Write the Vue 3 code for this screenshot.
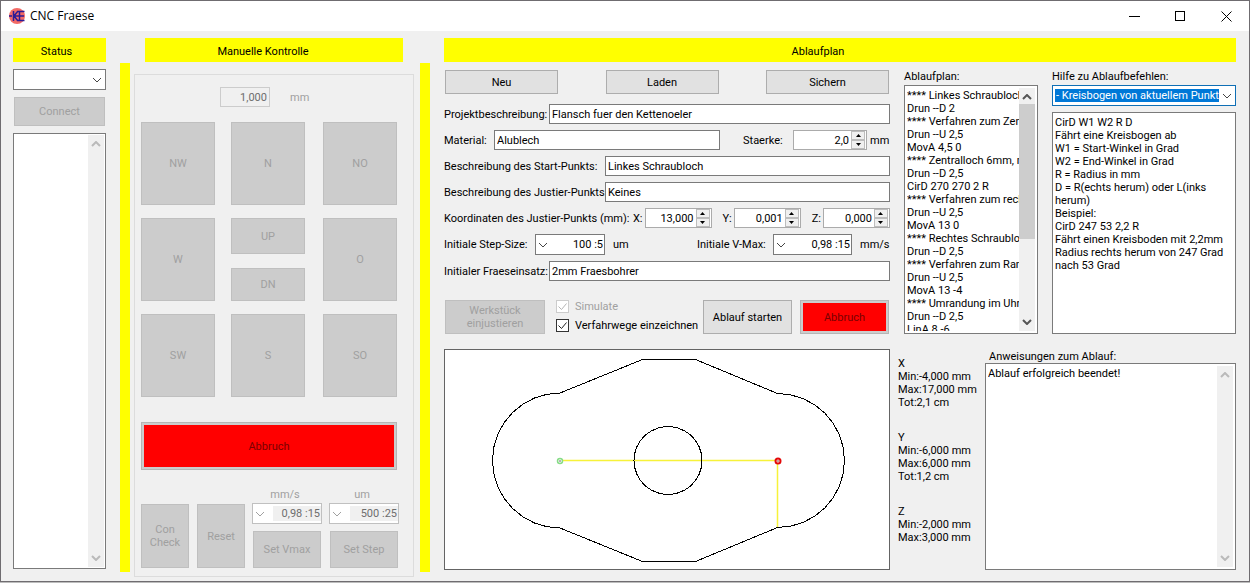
<script setup>
import { ref } from 'vue'

const simulate = ref(true)
const drawMoves = ref(true)

const planLines = [
  '**** Linkes Schraubloch',
  'Drun --D 2',
  '**** Verfahren zum Zent',
  'Drun --U 2,5',
  'MovA 4,5 0',
  '**** Zentralloch 6mm, m',
  'Drun --D 2,5',
  'CirD 270 270 2 R',
  '**** Verfahren zum recht',
  'Drun --U 2,5',
  'MovA 13 0',
  '**** Rechtes Schraubloc',
  'Drun --D 2,5',
  '**** Verfahren zum Rand',
  'Drun --U 2,5',
  'MovA 13 -4',
  '**** Umrandung im Uhrz',
  'Drun --D 2,5',
  'LinA 8 -6',
]
const planText = ref(planLines.join('\n'))

const helpText = ref(
  [
    'CirD W1 W2 R D',
    'Fährt eine Kreisbogen ab',
    'W1 = Start-Winkel in Grad',
    'W2 = End-Winkel in Grad',
    'R = Radius in mm',
    'D = R(echts herum) oder L(inks herum)',
    'Beispiel:',
    'CirD 247 53 2,2 R',
    'Fährt einen Kreisboden mit 2,2mm Radius rechts herum von 247 Grad nach 53 Grad',
  ].join('\n')
)

const axes = [
  { name: 'X', rows: ['Min:-4,000 mm', 'Max:17,000 mm', 'Tot:2,1 cm'] },
  { name: 'Y', rows: ['Min:-6,000 mm', 'Max:6,000 mm', 'Tot:1,2 cm'] },
  { name: 'Z', rows: ['Min:-2,000 mm', 'Max:3,000 mm'] },
]

const coords = [
  { axis: 'X', value: '13,000' },
  { axis: 'Y', value: '0,001' },
  { axis: 'Z', value: '0,000' },
]

/* Points along an arc, in degrees, clockwise on screen */
function arc(cx, cy, r, from, to, steps) {
  return Array.from({ length: steps + 1 }, (_, i) => {
    const a = ((from + ((to - from) * i) / steps) * Math.PI) / 180
    return `${(cx + r * Math.cos(a)).toFixed(1)},${(cy + r * Math.sin(a)).toFixed(1)}`
  })
}

const outline = [
  '197.5,9.5',
  '250.5,9.5',
  ...arc(332.5, 110.5, 67, -90, 90, 16),
  '250.5,211.5',
  '197.5,211.5',
  ...arc(115, 110.5, 67.5, 90, 270, 16),
].join(' ')
const hole = arc(223, 110.5, 34, 0, 360, 30).join(' ')
</script>

<template>
  <div class="window">
    <header class="titlebar">
      <svg class="logo" viewBox="0 0 16 16" aria-hidden="true">
        <circle cx="8" cy="8" r="8" fill="#f26a66" />
        <path d="M0 8h3M4.500 3v10M9 3L5 8l4 5M10.500 3v10M9 3.500h6.500M5 8h10M9 12.500h6.500" fill="none" stroke="#2a1a96" stroke-width="1.500" />
      </svg>
      <h1>CNC Fraese</h1>
      <button class="caption" aria-label="Minimieren">
        <svg viewBox="0 0 11 11"><path d="M0 5.500h11" /></svg>
      </button>
      <button class="caption" aria-label="Maximieren">
        <svg viewBox="0 0 11 11"><path d="M.5.5h9v9h-9z" /></svg>
      </button>
      <button class="caption" aria-label="Schließen">
        <svg viewBox="0 0 11 11"><path class="smooth" d="M.5.5l10 10M10.500.5l-10 10" /></svg>
      </button>
    </header>

    <main class="client">
      <section class="status">
        <h2>Status</h2>
        <div class="combo port">
          <select aria-label="Anschluss"><option></option></select>
          <svg viewBox="0 0 10 6"><path d="M1 1l4 4 4-4" /></svg>
        </div>
        <button class="btn connect" disabled>Connect</button>
        <div class="box messages">
          <textarea aria-label="Meldungen" readonly></textarea>
          <div class="bar idle">
            <svg viewBox="0 0 10 6"><path d="M1 5l4-4 4 4" /></svg>
            <svg viewBox="0 0 10 6"><path d="M1 1l4 4 4-4" /></svg>
          </div>
        </div>
      </section>

      <div class="divider"></div>

      <section class="manual">
        <h2>Manuelle Kontrolle</h2>
        <div class="panel">
          <div class="distance">
            <input id="distance" value="1,000" disabled />
            <label for="distance">mm</label>
          </div>
          <div class="pad">
            <button class="btn" disabled>NW</button>
            <button class="btn" disabled>N</button>
            <button class="btn" disabled>NO</button>
            <button class="btn" disabled>W</button>
            <div class="updown">
              <button class="btn up" disabled>UP</button>
              <button class="btn down" disabled>DN</button>
            </div>
            <button class="btn" disabled>O</button>
            <button class="btn" disabled>SW</button>
            <button class="btn" disabled>S</button>
            <button class="btn" disabled>SO</button>
          </div>
          <button class="stop wide" disabled>Abbruch</button>
          <div class="settings">
            <button class="btn tall" disabled>Con Check</button>
            <button class="btn tall" disabled>Reset</button>
            <div class="setting">
              <label for="vmax">mm/s</label>
              <div class="combo left off">
                <svg viewBox="0 0 10 6"><path d="M1 1l4 4 4-4" /></svg>
                <select id="vmax" disabled><option>0,98 :15</option></select>
              </div>
              <button class="btn" disabled>Set Vmax</button>
            </div>
            <div class="setting">
              <label for="step">um</label>
              <div class="combo left off">
                <svg viewBox="0 0 10 6"><path d="M1 1l4 4 4-4" /></svg>
                <select id="step" disabled><option>500 :25</option></select>
              </div>
              <button class="btn" disabled>Set Step</button>
            </div>
          </div>
        </div>
      </section>

      <div class="divider second"></div>

      <section class="plan">
        <h2>Ablaufplan</h2>
        <div class="upper">
          <form class="form" @submit.prevent>
            <div class="files">
              <button type="button" class="btn">Neu</button>
              <button type="button" class="btn">Laden</button>
              <button type="button" class="btn save">Sichern</button>
            </div>
            <div class="row">
              <label for="project" class="l-project">Projektbeschreibung:</label>
              <input id="project" class="text" value="Flansch fuer den Kettenoeler" />
            </div>
            <div class="row">
              <label for="material" class="l-material">Material:</label>
              <input id="material" class="text" value="Alublech" />
              <label for="thickness" class="l-thick">Staerke:</label>
              <div class="spin thick">
                <input id="thickness" value="2,0" />
                <div class="arrows">
                  <button type="button" aria-label="Mehr"><svg viewBox="0 0 5 3"><path d="M0 3h5L2.500 0z" /></svg></button>
                  <button type="button" aria-label="Weniger"><svg viewBox="0 0 5 3"><path d="M0 0h5L2.500 3z" /></svg></button>
                </div>
              </div>
              <span class="unit-mm">mm</span>
            </div>
            <div class="row">
              <label for="start" class="l-point">Beschreibung des Start-Punkts:</label>
              <input id="start" class="text" value="Linkes Schraubloch" />
            </div>
            <div class="row">
              <label for="adjust" class="l-point">Beschreibung des Justier-Punkts:</label>
              <input id="adjust" class="text" value="Keines" />
            </div>
            <div class="row coords">
              <span class="l-coords">Koordinaten des Justier-Punkts (mm):</span>
              <div v-for="c in coords" :key="c.axis" class="coord">
                <label :for="'coord' + c.axis">{{ c.axis }}:</label>
                <div class="spin">
                  <input :id="'coord' + c.axis" :value="c.value" />
                  <div class="arrows">
                    <button type="button" aria-label="Mehr"><svg viewBox="0 0 5 3"><path d="M0 3h5L2.500 0z" /></svg></button>
                    <button type="button" aria-label="Weniger"><svg viewBox="0 0 5 3"><path d="M0 0h5L2.500 3z" /></svg></button>
                  </div>
                </div>
              </div>
            </div>
            <div class="row">
              <label for="initstep" class="l-step">Initiale Step-Size:</label>
              <div class="combo left w70">
                <svg viewBox="0 0 10 6"><path d="M1 1l4 4 4-4" /></svg>
                <select id="initstep"><option>100 :5</option></select>
              </div>
              <span class="unit-um">um</span>
              <label for="initvmax" class="l-vmax">Initiale V-Max:</label>
              <div class="combo left w79">
                <svg viewBox="0 0 10 6"><path d="M1 1l4 4 4-4" /></svg>
                <select id="initvmax"><option>0,98 :15</option></select>
              </div>
              <span class="unit-speed">mm/s</span>
            </div>
            <div class="row">
              <label for="tool" class="l-project">Initialer Fraeseinsatz:</label>
              <input id="tool" class="text" value="2mm Fraesbohrer" />
            </div>
            <div class="actions">
              <button type="button" class="btn align" disabled>Werkstück<br />einjustieren</button>
              <div class="checks">
                <label class="check off">
                  <input v-model="simulate" type="checkbox" disabled />
                  <svg viewBox="0 0 11 11"><path d="M1.500 5.500l3 3 5-6" /></svg>Simulate
                </label>
                <label class="check">
                  <input v-model="drawMoves" type="checkbox" />
                  <svg viewBox="0 0 11 11"><path d="M1.500 5.500l3 3 5-6" /></svg>Verfahrwege einzeichnen
                </label>
              </div>
              <button type="button" class="btn run">Ablauf starten</button>
              <button type="button" class="stop" disabled>Abbruch</button>
            </div>
          </form>

          <div class="listing">
            <label for="listing">Ablaufplan:</label>
            <div class="box">
              <textarea id="listing" v-model="planText" wrap="off"></textarea>
              <div class="bar">
                <svg viewBox="0 0 10 6"><path d="M1 5l4-4 4 4" /></svg>
                <div class="track"><div class="thumb"></div></div>
                <svg viewBox="0 0 10 6"><path d="M1 1l4 4 4-4" /></svg>
              </div>
            </div>
          </div>

          <div class="help">
            <label for="topic">Hilfe zu Ablaufbefehlen:</label>
            <div class="combo topic">
              <input id="topic" value="- Kreisbogen von aktuellem Punkt" />
              <svg viewBox="0 0 10 6"><path d="M1 1l4 4 4-4" /></svg>
            </div>
            <div class="box helpbox">
              <textarea v-model="helpText" aria-label="Hilfetext" readonly></textarea>
            </div>
          </div>
        </div>

        <div class="lower">
          <div class="canvas">
            <svg viewBox="0 0 444 219" role="img" aria-label="Fräsweg">
              <path d="M117 110.500h216M332.500 111v67" fill="none" stroke="#f7f23a" stroke-width="1.500" />
              <g fill="none" stroke="#000" shape-rendering="crispEdges">
                <polygon :points="outline" />
                <polygon :points="hole" />
              </g>
              <circle cx="115" cy="111" r="2.500" fill="#fff" stroke="#86dc86" stroke-width="1.500" />
              <circle cx="115" cy="111" r=".7" fill="#333" />
              <circle cx="333" cy="111" r="2.500" fill="#fff" stroke="#e30808" stroke-width="2" />
              <circle cx="333" cy="111" r=".7" fill="#600" />
            </svg>
          </div>
          <div class="axes">
            <div v-for="a in axes" :key="a.name">
              <p>{{ a.name }}</p>
              <p v-for="r in a.rows" :key="r">{{ r }}</p>
            </div>
          </div>
          <div class="log">
            <label for="log">Anweisungen zum Ablauf:</label>
            <div class="box">
              <textarea id="log" readonly>Ablauf erfolgreich beendet!</textarea>
              <div class="bar idle">
                <svg viewBox="0 0 10 6"><path d="M1 5l4-4 4 4" /></svg>
                <svg viewBox="0 0 10 6"><path d="M1 1l4 4 4-4" /></svg>
              </div>
            </div>
          </div>
        </div>
      </section>
    </main>
  </div>
</template>

<style>
body {
  background: #bdbdbd;
}
</style>

<style scoped>
* {
  box-sizing: border-box;
}
.window {
  display: flex;
  flex-direction: column;
  min-height: calc(100vh - 1px);
  border: 1px solid #6f6c70;
  background: #f0f0f0;
  color: #000;
  font: 11px/13px Roboto, sans-serif;
}
button,
input,
select,
textarea {
  margin: 0;
  padding: 0;
  border: 0;
  border-radius: 0;
  background: none;
  color: inherit;
  font: inherit;
  min-width: 0;
}
label,
span,
p {
  white-space: nowrap;
}
p {
  margin: 0;
}
svg {
  display: block;
}

.titlebar {
  display: flex;
  align-items: center;
  height: 30px;
  padding-left: 8px;
  background: #fff;
}
.logo {
  width: 16px;
  height: 16px;
}
h1 {
  flex: 1;
  margin: 0 0 0 5px;
  font: 12px/16px 'Open Sans', sans-serif;
}
.caption {
  display: grid;
  place-items: center;
  width: 46px;
  height: 30px;
}
.caption svg {
  width: 11px;
  height: 11px;
  fill: none;
  stroke: #000;
  shape-rendering: crispEdges;
}
.caption .smooth {
  shape-rendering: auto;
}

.client {
  display: flex;
  flex: 1;
  padding: 7px 13px 0 12px;
}
h2 {
  height: 24px;
  margin: 0;
  padding-top: 1px;
  background: #ff0;
  font: inherit;
  line-height: 25px;
  text-align: center;
}
.status {
  display: flex;
  flex-direction: column;
  width: 93px;
  gap: 7px;
  padding-bottom: 12px;
}
.status h2 {
  padding-right: 6px;
}
.divider {
  width: 10px;
  margin: 25px 4px 9px 14px;
  background: #ff0;
}
.divider.second {
  margin: 25px 14px 9px 6px;
}

.btn {
  border: 1px solid #adadad;
  background: #e1e1e1;
}
.btn:disabled {
  border-color: #bfbfbf;
  background: #ccc;
  color: #a0a0a0;
}
.connect {
  height: 29px;
  margin: 0 1px;
}
.stop {
  border: 1px solid #b5b5b5;
  background: #f00;
  box-shadow: inset 0 0 0 2px #ccc;
  color: #7a0000;
}

.combo {
  display: flex;
  align-items: center;
  height: 21px;
  border: 1px solid #7a7a7a;
  background: #fff;
}
.combo select {
  flex: 1;
  height: 100%;
  appearance: none;
}
.combo svg {
  flex: none;
  width: 10px;
  height: 6px;
  margin: 0 3px 0 5px;
}
.combo svg,
.bar svg {
  fill: none;
  stroke: #444;
}
.combo.left svg {
  margin: 0 8px 0 2px;
}
.combo.left select {
  height: 15px;
  padding-right: 1px;
  text-align-last: right;
  line-height: 15px;
}
.combo.off {
  border-color: #c0c0c0;
}
.combo.off svg {
  stroke: #a0a0a0;
}
.combo.off select {
  background: #f0f0f0;
  color: #6d6d6d;
  opacity: 1;
}
.w70 {
  width: 70px;
}
.w79 {
  width: 79px;
}

.box {
  display: flex;
  border: 1px solid #7a7a7a;
  background: #fff;
  padding: 2px;
}
.box textarea {
  flex: 1;
  display: block;
  padding-top: 1px;
  resize: none;
  overflow: hidden;
  outline: 0;
}
.messages {
  flex: 1;
  padding: 1px;
}
.bar {
  display: flex;
  flex-direction: column;
  justify-content: space-between;
  align-items: center;
  width: 16px;
  padding: 6px 0;
  background: #f0f0f0;
}
.bar svg {
  width: 10px;
  height: 6px;
  stroke: #555;
  stroke-width: 2;
}
.bar.idle svg {
  stroke: #bababa;
}
.track {
  flex: 1;
  align-self: stretch;
  margin: 4px 0;
}
.thumb {
  height: 64%;
  background: #cdcdcd;
}

.manual {
  display: flex;
  flex-direction: column;
  width: 280px;
}
.manual h2 {
  margin: 0 11px;
  padding-right: 22px;
}
.panel {
  flex: 1;
  margin: 12px 0 4px;
  padding: 12px 16px 0 6px;
  border: 1px solid #dcdcdc;
}
.distance {
  display: flex;
  align-items: center;
  gap: 20px;
  padding-left: 79px;
  color: #a0a0a0;
}
.distance input {
  width: 50px;
  height: 20px;
  padding-right: 2px;
  border: 1px solid #ccc;
  color: #6d6d6d;
  text-align: right;
}
.pad {
  display: grid;
  grid-template-columns: 90px 92px 74px;
  grid-template-rows: repeat(3, 83px);
  row-gap: 13px;
  margin-top: 15px;
}
.pad > * {
  width: 74px;
}
.updown {
  display: flex;
  flex-direction: column;
  justify-content: space-between;
}
.up {
  height: 36px;
}
.down {
  height: 33px;
}
.wide {
  width: 100%;
  height: 48px;
  margin-top: 25px;
}
.settings {
  display: flex;
  align-items: flex-end;
  gap: 8px;
  margin: 18px -2px 0 0;
}
.tall {
  width: 48px;
  height: 64px;
}
.setting {
  display: flex;
  flex-direction: column;
  width: 70px;
  margin-left: -1px;
  color: #a0a0a0;
}
.setting label {
  text-align: center;
  padding-right: 4px;
}
.setting .combo {
  margin: 2px 0 7px;
}
.setting .btn {
  height: 37px;
  margin: 0 1px;
}

.plan {
  display: flex;
  flex: 1;
  flex-direction: column;
  min-width: 0;
  padding-bottom: 11px;
}
.plan h2 {
  padding-right: 44px;
}
.upper {
  display: flex;
  gap: 14px;
  margin-top: 8px;
}
.form {
  display: flex;
  flex: none;
  flex-direction: column;
  gap: 6px;
  width: 446px;
}
.files {
  display: flex;
  justify-content: space-between;
  margin: 0 1px 4px;
}
.files .btn {
  width: 113px;
  height: 24px;
}
.files .save {
  width: 123px;
}
.row {
  display: flex;
  align-items: center;
}
.row > label,
.row > .combo,
.row > .spin,
.row > span {
  flex: none;
}
.text {
  flex: 1;
  height: 20px;
  padding: 0 2px;
  border: 1px solid #7a7a7a;
  background: #fff;
}
.l-project {
  width: 105px;
}
.l-material {
  width: 50px;
}
.l-thick {
  width: 73px;
  padding-left: 23px;
}
.l-point {
  width: 161px;
}
.l-step {
  width: 91px;
}
.l-vmax {
  width: 76px;
}
.unit-mm {
  width: 23px;
  padding-left: 3px;
}
.unit-um {
  width: 92px;
  padding-left: 8px;
}
.unit-speed {
  padding-left: 8px;
}
.coords {
  justify-content: space-between;
}
.l-coords {
  width: 178px;
}
.coord {
  display: flex;
  align-items: center;
  gap: 2px;
}
.spin {
  display: flex;
  width: 67px;
  height: 20px;
  padding-right: 1px;
  border: 1px solid #ababab;
  background: #fff;
}
.spin.thick {
  width: 74px;
}
.spin input {
  flex: 1;
  text-align: right;
  padding-right: 2px;
}
.arrows {
  display: flex;
  flex-direction: column;
  width: 14px;
}
.arrows button {
  display: grid;
  flex: 1;
  place-items: center;
  border: 1px solid #bdbdbd;
  background: #f0f0f0;
}
.arrows svg {
  width: 5px;
  height: 3px;
}
.actions {
  display: flex;
  margin: 13px 1px 0;
}
.actions button {
  flex: none;
}
.align {
  width: 100px;
  height: 34px;
}
.checks {
  display: flex;
  flex: 1;
  flex-direction: column;
  gap: 6px;
  padding-left: 11px;
}
.check {
  display: flex;
  position: relative;
  align-items: center;
  gap: 6px;
}
.check input {
  width: 13px;
  height: 13px;
  appearance: none;
  border: 1px solid #333;
  background: #fff;
}
.check svg {
  position: absolute;
  top: 1px;
  left: 1px;
  width: 11px;
  height: 11px;
  fill: none;
  stroke: #222;
  stroke-width: 1;
}
.check input:not(:checked) + svg {
  display: none;
}
.check.off {
  color: #a0a0a0;
}
.check.off input {
  border-color: #ccc;
}
.check.off svg {
  stroke: #b5b5b5;
}
.run {
  width: 89px;
  margin-right: 8px;
}
.actions .stop {
  width: 89px;
}

.listing {
  display: flex;
  flex: none;
  flex-direction: column;
  width: 134px;
}
.listing label,
.help label {
  margin-bottom: 2px;
}
.listing .box {
  flex: 1;
}
.help {
  display: flex;
  flex: 1;
  flex-direction: column;
  min-width: 0;
}
.combo.topic {
  border-color: #0f6fb5;
}
.topic input {
  flex: 1;
  height: 13px;
  margin-left: 2px;
  padding-left: 1px;
  background: #0078d7;
  color: #fff;
}
.topic svg {
  margin: 0 3px;
}
.helpbox {
  flex: 1;
  margin-top: 6px;
}

.lower {
  display: flex;
  flex: 1;
  margin-top: 15px;
}
.canvas {
  flex: none;
  width: 446px;
  border: 1px solid #646464;
  background: #fff;
}
.canvas svg {
  width: 100%;
  height: 100%;
}
.axes {
  display: flex;
  flex: none;
  flex-direction: column;
  gap: 22px;
  width: 95px;
  padding: 8px 0 0 8px;
}
.log {
  display: flex;
  flex: 1;
  flex-direction: column;
  min-width: 0;
}
.log label {
  margin: 1px 0 0 4px;
}
.log .box {
  flex: 1;
}
</style>
